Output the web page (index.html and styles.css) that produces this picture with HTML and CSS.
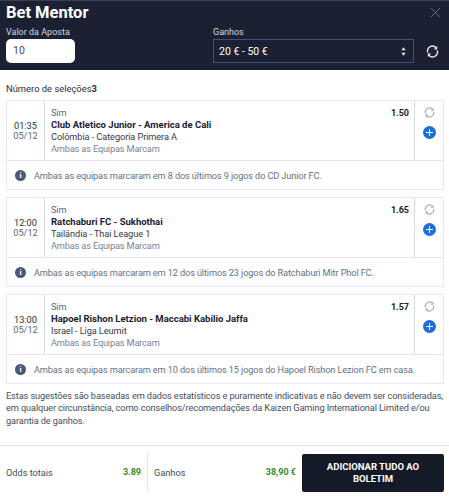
FILE: index.html
```html
<!DOCTYPE html>
<html lang="pt">
<head>
<meta charset="utf-8">
<title>Bet Mentor</title>
<link rel="stylesheet" href="styles.css">
</head>
<body>
<svg class="defs" width="0" height="0" aria-hidden="true">
  <symbol id="sync" viewBox="0 0 16 16">
    <path d="M2.2 9.2A6 6 0 0 1 12.6 3.6M13.8 6.8A6 6 0 0 1 3.4 12.4" fill="none" stroke="currentColor" stroke-width="1.7"/>
    <path d="M13.8 1.2v4.4H9.6zM2.2 14.8v-4.4h4.2z" fill="currentColor"/>
  </symbol>
</svg>
<header class="top">
  <div class="title-row">
    <h1>Bet Mentor</h1>
    <svg class="close" viewBox="0 0 12 12"><path d="M1 1l10 10M11 1L1 11" stroke="currentColor" stroke-width="1"/></svg>
  </div>
  <div class="controls">
    <div class="stake">
      <label>Valor da Aposta</label>
      <div class="stake-input">10</div>
    </div>
    <div class="gains">
      <label>Ganhos</label>
      <div class="select">
        <span>20 € - 50 €</span>
        <svg class="updown" viewBox="0 0 6 10"><path d="M3 0l2.6 3.6H.4zM3 10L.4 6.4h5.2z" fill="currentColor"/></svg>
      </div>
    </div>
    <svg class="refresh"><use href="#sync"/></svg>
  </div>
</header>

<main class="content">
  <p class="count">Número de seleções<b>3</b></p>

  <article class="card">
    <div class="row">
      <div class="when"><span class="time">01:35</span><span class="date">05/12</span></div>
      <div class="info">
        <div class="pick"><span>Sim</span><b>1.50</b></div>
        <div class="match">Club Atletico Junior - America de Cali</div>
        <div class="league">Colômbia - Categoria Primera A</div>
        <div class="market">Ambas as Equipas Marcam</div>
      </div>
      <div class="acts">
        <svg class="swap"><use href="#sync"/></svg>
        <span class="add"></span>
      </div>
    </div>
    <div class="note"><span class="i">i</span>Ambas as equipas marcaram em 8 dos últimos 9 jogos do CD Junior FC.</div>
  </article>

  <article class="card">
    <div class="row">
      <div class="when"><span class="time">12:00</span><span class="date">05/12</span></div>
      <div class="info">
        <div class="pick"><span>Sim</span><b>1.65</b></div>
        <div class="match">Ratchaburi FC - Sukhothai</div>
        <div class="league">Tailândia - Thai League 1</div>
        <div class="market">Ambas as Equipas Marcam</div>
      </div>
      <div class="acts">
        <svg class="swap"><use href="#sync"/></svg>
        <span class="add"></span>
      </div>
    </div>
    <div class="note"><span class="i">i</span>Ambas as equipas marcaram em 12 dos últimos 23 jogos do Ratchaburi Mitr Phol FC.</div>
  </article>

  <article class="card">
    <div class="row">
      <div class="when"><span class="time">13:00</span><span class="date">05/12</span></div>
      <div class="info">
        <div class="pick"><span>Sim</span><b>1.57</b></div>
        <div class="match">Hapoel Rishon Letzion - Maccabi Kabilio Jaffa</div>
        <div class="league">Israel - Liga Leumit</div>
        <div class="market">Ambas as Equipas Marcam</div>
      </div>
      <div class="acts">
        <svg class="swap"><use href="#sync"/></svg>
        <span class="add"></span>
      </div>
    </div>
    <div class="note"><span class="i">i</span>Ambas as equipas marcaram em 10 dos últimos 15 jogos do Hapoel Rishon Lezion FC em casa.</div>
  </article>

  <p class="disclaimer">Estas sugestões são baseadas em dados estatísticos e puramente indicativas e não devem ser consideradas, em qualquer circunstância, como conselhos/recomendações da Kaizen Gaming International Limited e/ou garantia de ganhos.</p>
</main>

<footer class="bottom">
  <div class="total odds"><span>Odds totais</span><b>3.89</b></div>
  <div class="total gain"><span>Ganhos</span><b>38,90 €</b></div>
  <button class="cta" type="button">ADICIONAR TUDO AO BOLETIM</button>
</footer>
</body>
</html>
```

FILE: styles.css
```css
* { box-sizing: border-box; }
html, body { margin: 0; padding: 0; }
body {
  width: 449px;
  height: 498px;
  overflow: hidden;
  background: #fff;
  font-family: Roboto, "Noto Sans", sans-serif;
  font-size: 9.2px;
  color: #2a3044;
}
.defs { position: absolute; }

.top {
  height: 70px;
  padding: 0 6px;
  background: #1b2133;
  border-top: 1px solid #3a3f50;
  color: #fff;
}
.title-row { display: flex; justify-content: space-between; align-items: center; height: 22px; padding-top: 1px; }
.title-row h1 { margin: 0; font-size: 16.5px; font-weight: 700; line-height: 21px; }
.close { width: 11px; height: 11px; margin-right: 2px; color: #6f7484; }
.controls { display: flex; align-items: flex-end; }
.controls label { display: block; height: 16px; font-size: 9px; line-height: 18px; color: #d5d7de; }
.stake { width: 207px; }
.stake-input {
  width: 69px;
  height: 24px;
  padding: 0 7px;
  background: #fff;
  border-radius: 5px;
  color: #444a5a;
  font-size: 10.5px;
  line-height: 24px;
}
.gains { width: 201px; }
.select {
  display: flex;
  align-items: center;
  justify-content: space-between;
  height: 24px;
  padding: 0 7px 0 5px;
  border: 1px solid #3f5478;
  font-size: 10.5px;
}
.updown { width: 5px; height: 9px; color: #e4e5ea; }
.refresh { width: 13px; height: 13px; margin: 0 0 5px 12px; color: #e6e7eb; }

.content { padding: 0 5px 0 6px; }
.count { margin: 0; height: 30px; padding-top: 12px; font-size: 9.4px; line-height: 13px; }
.count b { font-weight: 700; }

.card { height: 90px; margin-bottom: 7px; border: 1px solid #e6e9f2; }
.row { display: flex; height: 60px; border-bottom: 1px solid #e2e6f0; }
.when {
  width: 38px;
  display: flex;
  flex-direction: column;
  align-items: center;
  justify-content: center;
  border-right: 1px solid #d5dae8;
  font-size: 9.2px;
  line-height: 9.5px;
}
.date { color: #5d6579; }
.info { flex: 1; padding: 6px 5px 0 6px; border-right: 1px solid #d5dae8; line-height: 12px; }
.pick { display: flex; justify-content: space-between; color: #5d6579; letter-spacing: -0.15px; }
.pick b { color: #1b2133; font-size: 9px; font-weight: 700; letter-spacing: 0; }
.match { font-size: 9.5px; font-weight: 700; color: #1b2133; }
.league { color: #333a4e; letter-spacing: -0.08px; }
.market { color: #7a8296; letter-spacing: -0.15px; }
.acts { width: 28px; display: flex; flex-direction: column; align-items: center; padding-top: 6px; }
.swap { width: 11px; height: 11px; color: #a9adb8; }
.add {
  position: relative;
  width: 13px;
  height: 13px;
  margin-top: 8px;
  border-radius: 50%;
  background: #1c6fdc;
}
.add::before, .add::after { content: ""; position: absolute; background: #fff; }
.add::before { left: 3px; top: 6px; width: 7px; height: 1px; }
.add::after { left: 6px; top: 3px; width: 1px; height: 7px; }
.note { display: flex; align-items: center; height: 29px; padding-left: 8px; color: #667086; letter-spacing: -0.12px; }
.i {
  flex: none;
  width: 11px;
  height: 11px;
  margin-right: 8px;
  border-radius: 50%;
  background: #4b5878;
  color: #fff;
  font-size: 8px;
  font-weight: 700;
  line-height: 11px;
  letter-spacing: 0;
  text-align: center;
}
.disclaimer { margin: -1px 0 0; line-height: 12.4px; color: #454c60; letter-spacing: -0.1px; }

.bottom {
  position: absolute;
  left: 0;
  top: 445px;
  width: 449px;
  height: 53px;
  display: flex;
  align-items: flex-start;
  padding: 6px 5px 0 6px;
  border-top: 1px solid #e2e6f0;
}
.total { display: flex; justify-content: space-between; align-items: center; height: 40px; }
.total span { color: #454c60; }
.total b { color: #3b8a2e; font-size: 9px; font-weight: 700; }
.odds { width: 142px; padding-right: 6px; border-right: 1px solid #e2e6f0; }
.gain { width: 154px; padding: 0 6px; }
.cta {
  width: 142px;
  height: 38px;
  margin-top: 2px;
  padding: 0 20px;
  border: 0;
  border-radius: 2px;
  background: #151a28;
  color: #fff;
  font: 700 9.5px/12px Roboto, sans-serif;
}
```
